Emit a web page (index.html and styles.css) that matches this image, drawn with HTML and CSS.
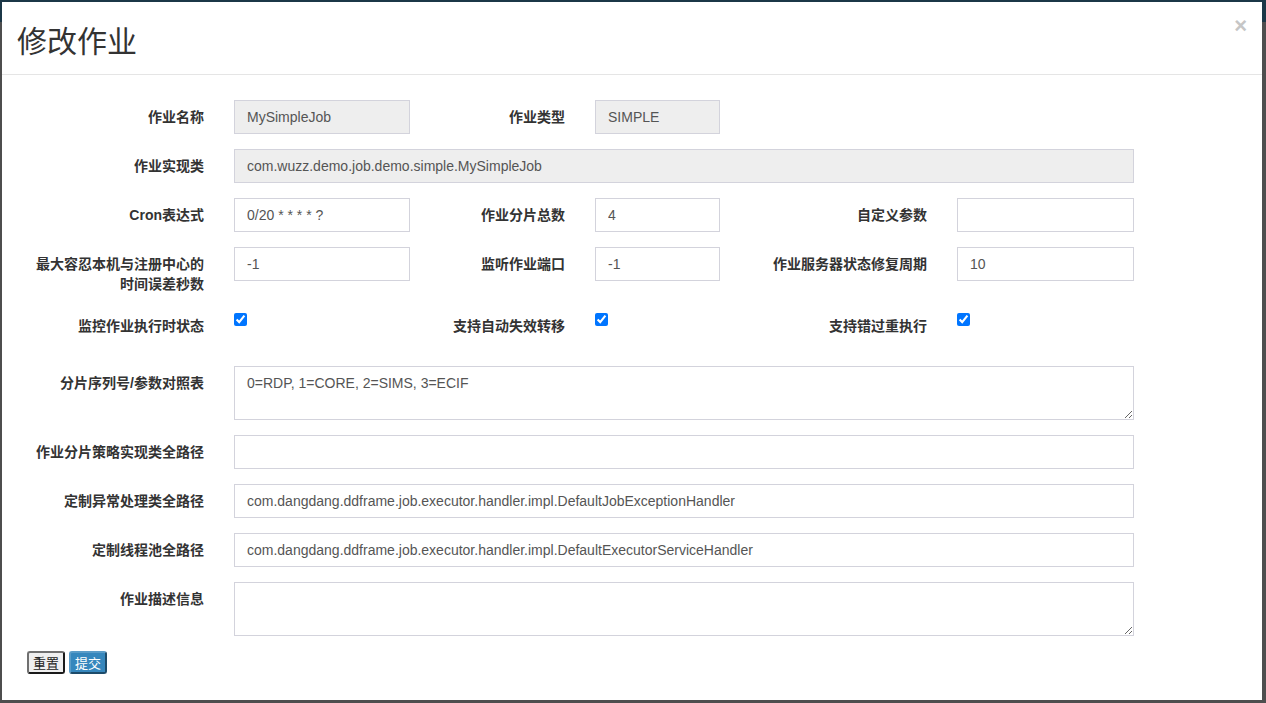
FILE: index.html
```html
<!DOCTYPE html>
<html lang="zh-CN">
<head>
<meta charset="utf-8">
<title>修改作业</title>
<link rel="stylesheet" href="styles.css">
</head>
<body>
<div class="modal">
  <div class="modal-header">
    <h4 class="modal-title">修改作业</h4>
    <button class="close" type="button">×</button>
  </div>
  <form class="modal-body">
    <div class="row">
      <label class="lbl">作业名称</label>
      <input class="ctl ro" value="MySimpleJob" readonly>
      <label class="lbl">作业类型</label>
      <input class="ctl ro" value="SIMPLE" readonly>
    </div>
    <div class="row">
      <label class="lbl">作业实现类</label>
      <input class="ctl ro wide" value="com.wuzz.demo.job.demo.simple.MySimpleJob" readonly>
    </div>
    <div class="row">
      <label class="lbl">Cron表达式</label>
      <input class="ctl" value="0/20 * * * * ?">
      <label class="lbl">作业分片总数</label>
      <input class="ctl" value="4">
      <label class="lbl">自定义参数</label>
      <input class="ctl" value="">
    </div>
    <div class="row">
      <label class="lbl">最大容忍本机与注册中心的时间误差秒数</label>
      <input class="ctl" value="-1">
      <label class="lbl">监听作业端口</label>
      <input class="ctl" value="-1">
      <label class="lbl">作业服务器状态修复周期</label>
      <input class="ctl" value="10">
    </div>
    <div class="row checks">
      <label class="lbl">监控作业执行时状态</label>
      <div class="chk"><input type="checkbox" checked></div>
      <label class="lbl">支持自动失效转移</label>
      <div class="chk"><input type="checkbox" checked></div>
      <label class="lbl">支持错过重执行</label>
      <div class="chk"><input type="checkbox" checked></div>
    </div>
    <div class="row">
      <label class="lbl">分片序列号/参数对照表</label>
      <textarea class="ctl wide area">0=RDP, 1=CORE, 2=SIMS, 3=ECIF</textarea>
    </div>
    <div class="row">
      <label class="lbl">作业分片策略实现类全路径</label>
      <input class="ctl wide" value="">
    </div>
    <div class="row">
      <label class="lbl">定制异常处理类全路径</label>
      <input class="ctl wide" value="com.dangdang.ddframe.job.executor.handler.impl.DefaultJobExceptionHandler">
    </div>
    <div class="row">
      <label class="lbl">定制线程池全路径</label>
      <input class="ctl wide" value="com.dangdang.ddframe.job.executor.handler.impl.DefaultExecutorServiceHandler">
    </div>
    <div class="row">
      <label class="lbl">作业描述信息</label>
      <textarea class="ctl wide area"></textarea>
    </div>
    <div class="actions">
      <button type="reset" class="btn btn-default">重置</button>
      <button type="button" class="btn btn-primary">提交</button>
    </div>
  </form>
</div>
</body>
</html>
```

FILE: styles.css
```css
* { box-sizing: border-box; }
html, body { margin: 0; padding: 0; }
body {
  width: 1266px;
  height: 703px;
  overflow: hidden;
  background: linear-gradient(to bottom, #1b3747 0, #1b3747 22px, #4e4e4e 22px);
  font-family: "Liberation Sans", "Noto Sans CJK SC", sans-serif;
  color: #333;
  padding: 2px 4px 3px 2px;
}
.modal {
  width: 1260px;
  height: 698px;
  background: #fff;
  display: flex;
  flex-direction: column;
}
.modal-header {
  display: flex;
  align-items: flex-start;
  justify-content: space-between;
  padding: 15px 15px 14px 15px;
  border-bottom: 1px solid #e5e5e5;
  height: 73px;
}
.modal-title {
  margin: 0;
  font-size: 30px;
  font-weight: normal;
  line-height: 44px;
  color: #333;
  font-family: "Noto Sans CJK SC", sans-serif;
}
.close {
  border: 0;
  background: none;
  padding: 0;
  margin-top: -2px;
  margin-right: 0;
  font-size: 22px;
  font-weight: bold;
  line-height: 1;
  color: #c6c6c6;
  font-family: "Liberation Sans", sans-serif;
}
.modal-body {
  margin: 0;
  padding: 25px 0 0 0;
}
.row {
  display: grid;
  grid-template-columns: 232px 176px 185px 125px 237px 177px;
  margin-bottom: 15px;
}
.lbl {
  text-align: right;
  padding: 7px 30px 0 22px;
  font-size: 14px;
  line-height: 20px;
  font-weight: bold;
  color: #333;
  font-family: "Liberation Sans", "Noto Sans CJK SC", sans-serif;
}
.ctl {
  height: 34px;
  padding: 6px 12px;
  font-size: 14px;
  line-height: 20px;
  color: #555;
  background: #fff;
  border: 1px solid #d3d3dc;
  border-radius: 0;
  font-family: "Liberation Sans", "Noto Sans CJK SC", sans-serif;
  outline: none;
  width: 100%;
  margin: 0;
}
.ro { background: #eeeeee; }
.wide { grid-column: 2 / 7; }
.area {
  height: 54px;
  resize: vertical;
  display: block;
}
.checks { height: 42px; }
.chk input {
  margin: 4px 0 0 0;
  width: 13px;
  height: 13px;
  display: block;
}
.actions {
  display: flex;
  gap: 4px;
  padding-left: 25px;
}
.btn {
  height: 23px;
  width: 38px;
  padding: 0;
  font-size: 13px;
  line-height: 19px;
  border-radius: 3px;
  font-family: "Noto Sans CJK SC", sans-serif;
}
.btn-default {
  background: #efefef;
  color: #222;
  border: 2px solid;
  border-color: #707070 #1a1a1a #1a1a1a #707070;
}
.btn-primary {
  background: #3687bd;
  color: #fff;
  border: 2px solid;
  border-color: #5a9cc8 #1d4b6a #1d4b6a #5a9cc8;
}
```
